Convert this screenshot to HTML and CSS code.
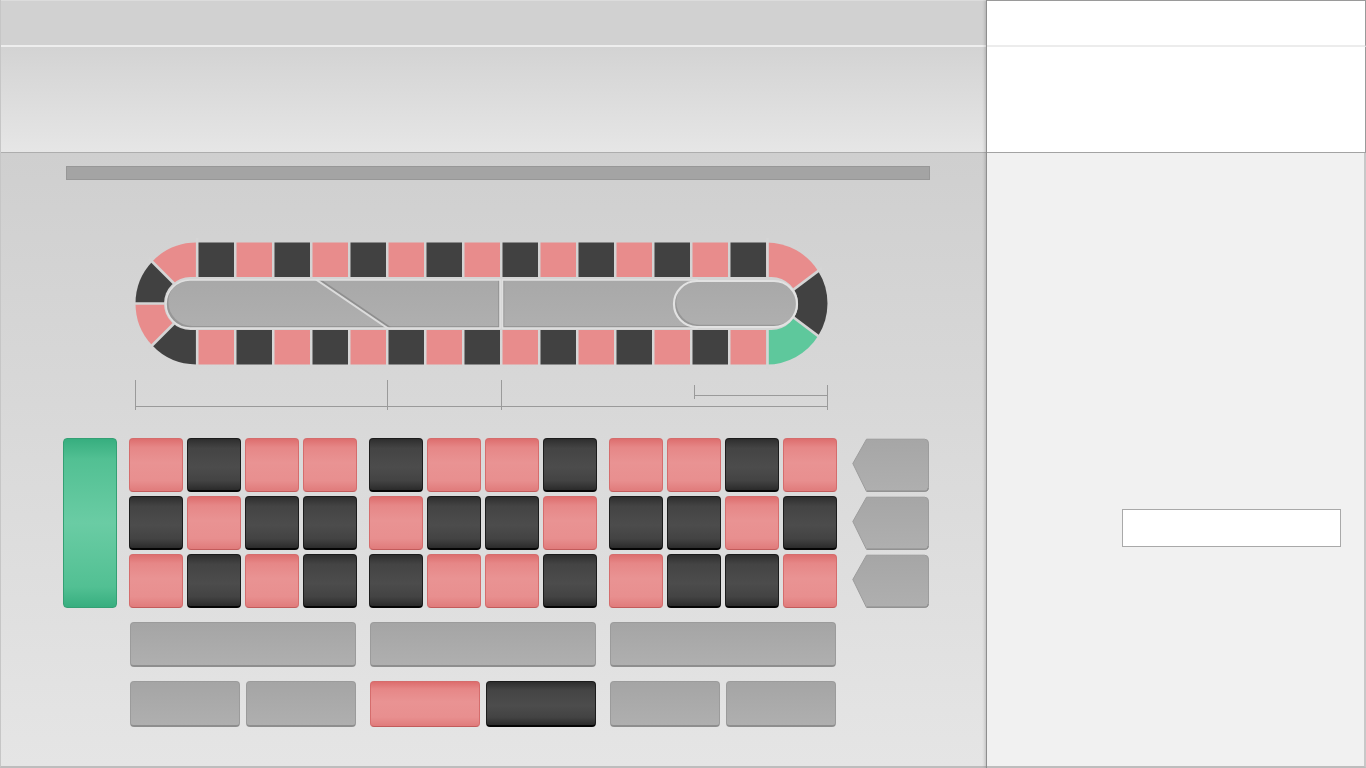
FILE: index.html
```html
<!DOCTYPE html>
<html lang="en">
<head>
<meta charset="utf-8">
<title>Roulette table</title>
<link rel="stylesheet" href="styles.css">
</head>
<body>
<div class="app">
  <div class="main">
    <div class="topbar"></div>
    <div class="header"></div>
    <div class="content">
      <div class="progress"></div>

      <svg class="racetrack" width="710" height="176" viewBox="130 238 710 176" xmlns="http://www.w3.org/2000/svg">
        <defs>
          <linearGradient id="tg" x1="0" y1="0" x2="0" y2="1">
            <stop offset="0" stop-color="#a8a8a8"/>
            <stop offset="1" stop-color="#afafaf"/>
          </linearGradient>
          <clipPath id="clipL"><path d="M190 280 H500 V328 H190 A24 24 0 0 1 190 280 Z"/></clipPath>
          <clipPath id="clipR"><path d="M502.5 280 H697 V328 H502.5 Z"/></clipPath>
          <clipPath id="clipZ"><path d="M697 281 H774 A23 23 0 0 1 774 327 H697 A23 23 0 0 1 697 281 Z"/></clipPath>
        </defs>

        <!-- left end -->
        <path fill="#e88c8c" d="M196.5 303.5 V242.5 A61 61 0 0 0 152.13 261.63 L194 303.5 Z"/>
        <path fill="#414141" d="M194 303.5 L152.13 261.63 A61 61 0 0 0 135.5 303.5 Z"/>
        <path fill="#e88c8c" d="M194 303.5 L135.5 303.5 A61 61 0 0 0 152.13 345.37 Z"/>
        <path fill="#414141" d="M194 303.5 L152.13 345.37 A61 61 0 0 0 196.5 364.5 V303.5 Z"/>
        <!-- right end -->
        <path fill="#e88c8c" d="M766.5 303.5 V242.5 A61 61 0 0 1 818.1 271 L775 303.5 Z"/>
        <path fill="#414141" d="M775 303.5 L818.1 271 A61 61 0 0 1 818.1 336 Z"/>
        <path fill="#5ec89c" d="M775 303.5 L818.1 336 A61 61 0 0 1 766.5 364.5 V303.5 Z"/>

        <g stroke="#d5d5d5" stroke-width="2.6">
          <line x1="197.2" y1="238" x2="197.2" y2="369"/>
          <line x1="767.5" y1="238" x2="767.5" y2="369"/>
          <line x1="194" y1="303.5" x2="149" y2="258.5"/>
          <line x1="194" y1="303.5" x2="131" y2="303.5"/>
          <line x1="194" y1="303.5" x2="149" y2="348.5"/>
          <line x1="775" y1="303.5" x2="822" y2="268.1"/>
          <line x1="775" y1="303.5" x2="822" y2="338.9"/>
        </g>

        <!-- top row -->
        <g>
          <rect x="198.5" y="242.5" width="35.5" height="34.5" fill="#414141"/>
          <rect x="236.5" y="242.5" width="35.5" height="34.5" fill="#e88c8c"/>
          <rect x="274.5" y="242.5" width="35.5" height="34.5" fill="#414141"/>
          <rect x="312.5" y="242.5" width="35.5" height="34.5" fill="#e88c8c"/>
          <rect x="350.5" y="242.5" width="35.5" height="34.5" fill="#414141"/>
          <rect x="388.5" y="242.5" width="35.5" height="34.5" fill="#e88c8c"/>
          <rect x="426.5" y="242.5" width="35.5" height="34.5" fill="#414141"/>
          <rect x="464.5" y="242.5" width="35.5" height="34.5" fill="#e88c8c"/>
          <rect x="502.5" y="242.5" width="35.5" height="34.5" fill="#414141"/>
          <rect x="540.5" y="242.5" width="35.5" height="34.5" fill="#e88c8c"/>
          <rect x="578.5" y="242.5" width="35.5" height="34.5" fill="#414141"/>
          <rect x="616.5" y="242.5" width="35.5" height="34.5" fill="#e88c8c"/>
          <rect x="654.5" y="242.5" width="35.5" height="34.5" fill="#414141"/>
          <rect x="692.5" y="242.5" width="35.5" height="34.5" fill="#e88c8c"/>
          <rect x="730.5" y="242.5" width="35.5" height="34.5" fill="#414141"/>
        </g>
        <!-- bottom row -->
        <g>
          <rect x="198.5" y="330" width="35.5" height="34.5" fill="#e88c8c"/>
          <rect x="236.5" y="330" width="35.5" height="34.5" fill="#414141"/>
          <rect x="274.5" y="330" width="35.5" height="34.5" fill="#e88c8c"/>
          <rect x="312.5" y="330" width="35.5" height="34.5" fill="#414141"/>
          <rect x="350.5" y="330" width="35.5" height="34.5" fill="#e88c8c"/>
          <rect x="388.5" y="330" width="35.5" height="34.5" fill="#414141"/>
          <rect x="426.5" y="330" width="35.5" height="34.5" fill="#e88c8c"/>
          <rect x="464.5" y="330" width="35.5" height="34.5" fill="#414141"/>
          <rect x="502.5" y="330" width="35.5" height="34.5" fill="#e88c8c"/>
          <rect x="540.5" y="330" width="35.5" height="34.5" fill="#414141"/>
          <rect x="578.5" y="330" width="35.5" height="34.5" fill="#e88c8c"/>
          <rect x="616.5" y="330" width="35.5" height="34.5" fill="#414141"/>
          <rect x="654.5" y="330" width="35.5" height="34.5" fill="#e88c8c"/>
          <rect x="692.5" y="330" width="35.5" height="34.5" fill="#414141"/>
          <rect x="730.5" y="330" width="35.5" height="34.5" fill="#e88c8c"/>
        </g>

        <!-- gap around the inner track -->
        <rect x="164" y="277" width="634" height="53" rx="26.5" fill="#d4d4d4"/>

        <!-- inner track, left piece -->
        <path d="M190 280 H500 V328 H190 A24 24 0 0 1 190 280 Z" fill="#979797"/>
        <g clip-path="url(#clipL)">
          <path d="M190 280 H500 V328 H190 A24 24 0 0 1 190 280 Z" fill="url(#tg)" transform="translate(2.4,-2)"/>
          <line x1="318" y1="279" x2="391.5" y2="329" stroke="#8f8f8f" stroke-width="2.6"/>
          <line x1="315.3" y1="279" x2="388.8" y2="329" stroke="#dcdcdc" stroke-width="2"/>
          <line x1="499.2" y1="279" x2="499.2" y2="329" stroke="#8f8f8f" stroke-width="1.8"/>
        </g>
        <path d="M190 280 H500 V328 H190 A24 24 0 0 1 190 280 Z" fill="none" stroke="#e0e0e0" stroke-width="1.6"/>

        <!-- inner track, right piece -->
        <path d="M502.5 280 H697 V328 H502.5 Z" fill="#979797"/>
        <g clip-path="url(#clipR)">
          <path d="M502.5 280 H697 V328 H502.5 Z" fill="url(#tg)" transform="translate(1.8,-2)"/>
        </g>
        <path d="M502.5 280 H697 V328 H502.5 Z" fill="none" stroke="#e0e0e0" stroke-width="1.6"/>

        <!-- zero pill -->
        <path d="M697 281 H774 A23 23 0 0 1 774 327 H697 A23 23 0 0 1 697 281 Z" fill="#979797"/>
        <g clip-path="url(#clipZ)">
          <path d="M697 281 H774 A23 23 0 0 1 774 327 H697 A23 23 0 0 1 697 281 Z" fill="url(#tg)" transform="translate(2.2,-2.2)"/>
        </g>
        <path d="M697 281 H774 A23 23 0 0 1 774 327 H697 A23 23 0 0 1 697 281 Z" fill="none" stroke="#e2e2e2" stroke-width="2.2"/>

        <!-- brackets -->
        <g stroke="#9a9a9a" stroke-width="1" fill="none">
          <line x1="135.5" y1="380" x2="135.5" y2="410"/>
          <line x1="387.5" y1="380" x2="387.5" y2="410"/>
          <line x1="501.5" y1="380" x2="501.5" y2="410"/>
          <line x1="827.5" y1="385" x2="827.5" y2="410"/>
          <line x1="135" y1="406.5" x2="828" y2="406.5"/>
          <line x1="694.5" y1="385" x2="694.5" y2="399"/>
          <line x1="694" y1="395.5" x2="828" y2="395.5"/>
        </g>
      </svg>

      <div class="pad">
        <div class="green"></div>
        <div class="group">
          <div class="cell red"></div><div class="cell black"></div><div class="cell red"></div><div class="cell red"></div>
          <div class="cell black"></div><div class="cell red"></div><div class="cell black"></div><div class="cell black"></div>
          <div class="cell red"></div><div class="cell black"></div><div class="cell red"></div><div class="cell black"></div>
        </div>
        <div class="group">
          <div class="cell black"></div><div class="cell red"></div><div class="cell red"></div><div class="cell black"></div>
          <div class="cell red"></div><div class="cell black"></div><div class="cell black"></div><div class="cell red"></div>
          <div class="cell black"></div><div class="cell red"></div><div class="cell red"></div><div class="cell black"></div>
        </div>
        <div class="group">
          <div class="cell red"></div><div class="cell red"></div><div class="cell black"></div><div class="cell red"></div>
          <div class="cell black"></div><div class="cell black"></div><div class="cell red"></div><div class="cell black"></div>
          <div class="cell red"></div><div class="cell black"></div><div class="cell black"></div><div class="cell red"></div>
        </div>
        <div class="arrows">
          <svg class="arrow" width="77" height="54" viewBox="0 0 77 54" xmlns="http://www.w3.org/2000/svg">
            <defs>
              <linearGradient id="ag" x1="0" y1="0" x2="0" y2="1">
                <stop offset="0" stop-color="#a6a6a6"/>
                <stop offset="1" stop-color="#afafaf"/>
              </linearGradient>
            </defs>
            <path d="M0.8 25.5 L14.5 1.2 H72.5 Q76.5 1.2 76.5 5.2 V49.5 Q76.5 53.5 72.5 53.5 H14.5 Z" fill="url(#ag)" stroke="#9c9c9c" stroke-width="1"/>
            <path d="M15 53.2 H72.5 Q76 53.2 76.3 49.8" fill="none" stroke="#8e8e8e" stroke-width="1.2"/>
          </svg>
          <svg class="arrow" width="77" height="54" viewBox="0 0 77 54" xmlns="http://www.w3.org/2000/svg">
            <path d="M0.8 25.5 L14.5 1.2 H72.5 Q76.5 1.2 76.5 5.2 V49.5 Q76.5 53.5 72.5 53.5 H14.5 Z" fill="url(#ag)" stroke="#9c9c9c" stroke-width="1"/>
            <path d="M15 53.2 H72.5 Q76 53.2 76.3 49.8" fill="none" stroke="#8e8e8e" stroke-width="1.2"/>
          </svg>
          <svg class="arrow" width="77" height="54" viewBox="0 0 77 54" xmlns="http://www.w3.org/2000/svg">
            <path d="M0.8 25.5 L14.5 1.2 H72.5 Q76.5 1.2 76.5 5.2 V49.5 Q76.5 53.5 72.5 53.5 H14.5 Z" fill="url(#ag)" stroke="#9c9c9c" stroke-width="1"/>
            <path d="M15 53.2 H72.5 Q76 53.2 76.3 49.8" fill="none" stroke="#8e8e8e" stroke-width="1.2"/>
          </svg>
        </div>
      </div>

      <div class="btnrow">
        <div class="btn gray wide"></div>
        <div class="btn gray wide"></div>
        <div class="btn gray wide"></div>
      </div>
      <div class="btnrow">
        <div class="pair">
          <div class="btn gray half"></div>
          <div class="btn gray half"></div>
        </div>
        <div class="pair">
          <div class="btn red half"></div>
          <div class="btn black half"></div>
        </div>
        <div class="pair">
          <div class="btn gray half"></div>
          <div class="btn gray half"></div>
        </div>
      </div>
    </div>
  </div>

  <div class="side">
    <div class="side-top"></div>
    <div class="side-head"></div>
    <div class="side-body">
      <div class="field"></div>
    </div>
  </div>
</div>
</body>
</html>
```

FILE: styles.css
```css
* {
  box-sizing: border-box;
}

html,
body {
  margin: 0;
  padding: 0;
  width: 1366px;
  height: 768px;
  overflow: hidden;
  font-family: "Liberation Sans", Arial, sans-serif;
  background: #e4e4e4;
}

.app {
  display: flex;
  width: 1366px;
  height: 768px;
}

/* ---------- left / main panel ---------- */
.main {
  width: 986px;
  height: 768px;
  display: flex;
  flex-direction: column;
  border-left: 1px solid #c6c6c6;
  border-bottom: 2px solid #bdbdbd;
}

.topbar {
  height: 47px;
  flex: none;
  background: #d1d1d1;
  border-top: 1px solid #dcdcdc;
  border-bottom: 2px solid #eeeeee;
}

.header {
  height: 106px;
  flex: none;
  background: linear-gradient(#d3d3d3, #e6e6e6);
  border-bottom: 1px solid #adadad;
}

.content {
  flex: 1;
  background: linear-gradient(#cfcfcf, #e5e5e5);
  padding-top: 13px;
}

.progress {
  width: 864px;
  height: 14px;
  margin-left: 65px;
  background: #a4a4a4;
  border: 1px solid #979797;
}

.racetrack {
  display: block;
  margin: 58px 0 0 129px;
}

/* ---------- betting pad ---------- */
.pad {
  display: flex;
  gap: 12px;
  margin: 24px 0 0 62px;
}

.green {
  width: 54px;
  height: 170px;
  border-radius: 4px;
  border: 1px solid #34a074;
  background: linear-gradient(#37ae7f 0%, #52c093 12%, #6acca4 50%, #52c093 88%, #37ae7f 100%);
}

.group {
  display: grid;
  grid-template-columns: repeat(4, 54px);
  grid-auto-rows: 54px;
  gap: 4px;
}

.cell {
  border-radius: 4px;
}

.red {
  background: linear-gradient(#dd6e6e 0%, #e68787 16%, #e99393 45%, #e88f8f 80%, #e07b7b 100%);
  border: 1px solid #d56c6c;
  border-bottom-color: #c25b5b;
}

.black {
  background: linear-gradient(#2e2e2e 0%, #444444 18%, #4c4c4c 55%, #434343 82%, #2b2b2b 100%);
  border: 1px solid #1c1c1c;
  border-bottom: 2px solid #050505;
}

.gray {
  background: linear-gradient(#a5a5a5, #afafaf);
  border: 1px solid #9b9b9b;
  border-bottom: 2px solid #8e8e8e;
}

.arrows {
  display: flex;
  flex-direction: column;
  gap: 4px;
  margin-left: 3px;
}

.arrow {
  display: block;
}

/* ---------- bottom buttons ---------- */
.btnrow {
  display: flex;
  gap: 14px;
  margin: 14px 0 0 129px;
}

.btn {
  border-radius: 4px;
}

.wide {
  width: 226px;
  height: 45px;
}

.pair {
  display: flex;
  gap: 6px;
}

.half {
  width: 110px;
  height: 46px;
}

/* ---------- right side panel ---------- */
.side {
  width: 380px;
  height: 768px;
  display: flex;
  flex-direction: column;
  border-left: 1px solid #8e8e8e;
  box-shadow: -1px 0 3px rgba(0, 0, 0, 0.18);
}

.side-top {
  height: 47px;
  flex: none;
  background: #ffffff;
  border-top: 1px solid #9a9a9a;
  border-right: 1px solid #9a9a9a;
  border-bottom: 2px solid #ececec;
}

.side-head {
  height: 106px;
  flex: none;
  background: #ffffff;
  border-right: 1px solid #9a9a9a;
  border-bottom: 1px solid #a3a3a3;
}

.side-body {
  flex: 1;
  background: #f1f1f1;
  border-right: 2px solid #c8c8c8;
  border-bottom: 2px solid #bdbdbd;
  padding: 356px 0 0 135px;
}

.field {
  width: 219px;
  height: 38px;
  background: #ffffff;
  border: 1px solid #a9a9a9;
}
```
